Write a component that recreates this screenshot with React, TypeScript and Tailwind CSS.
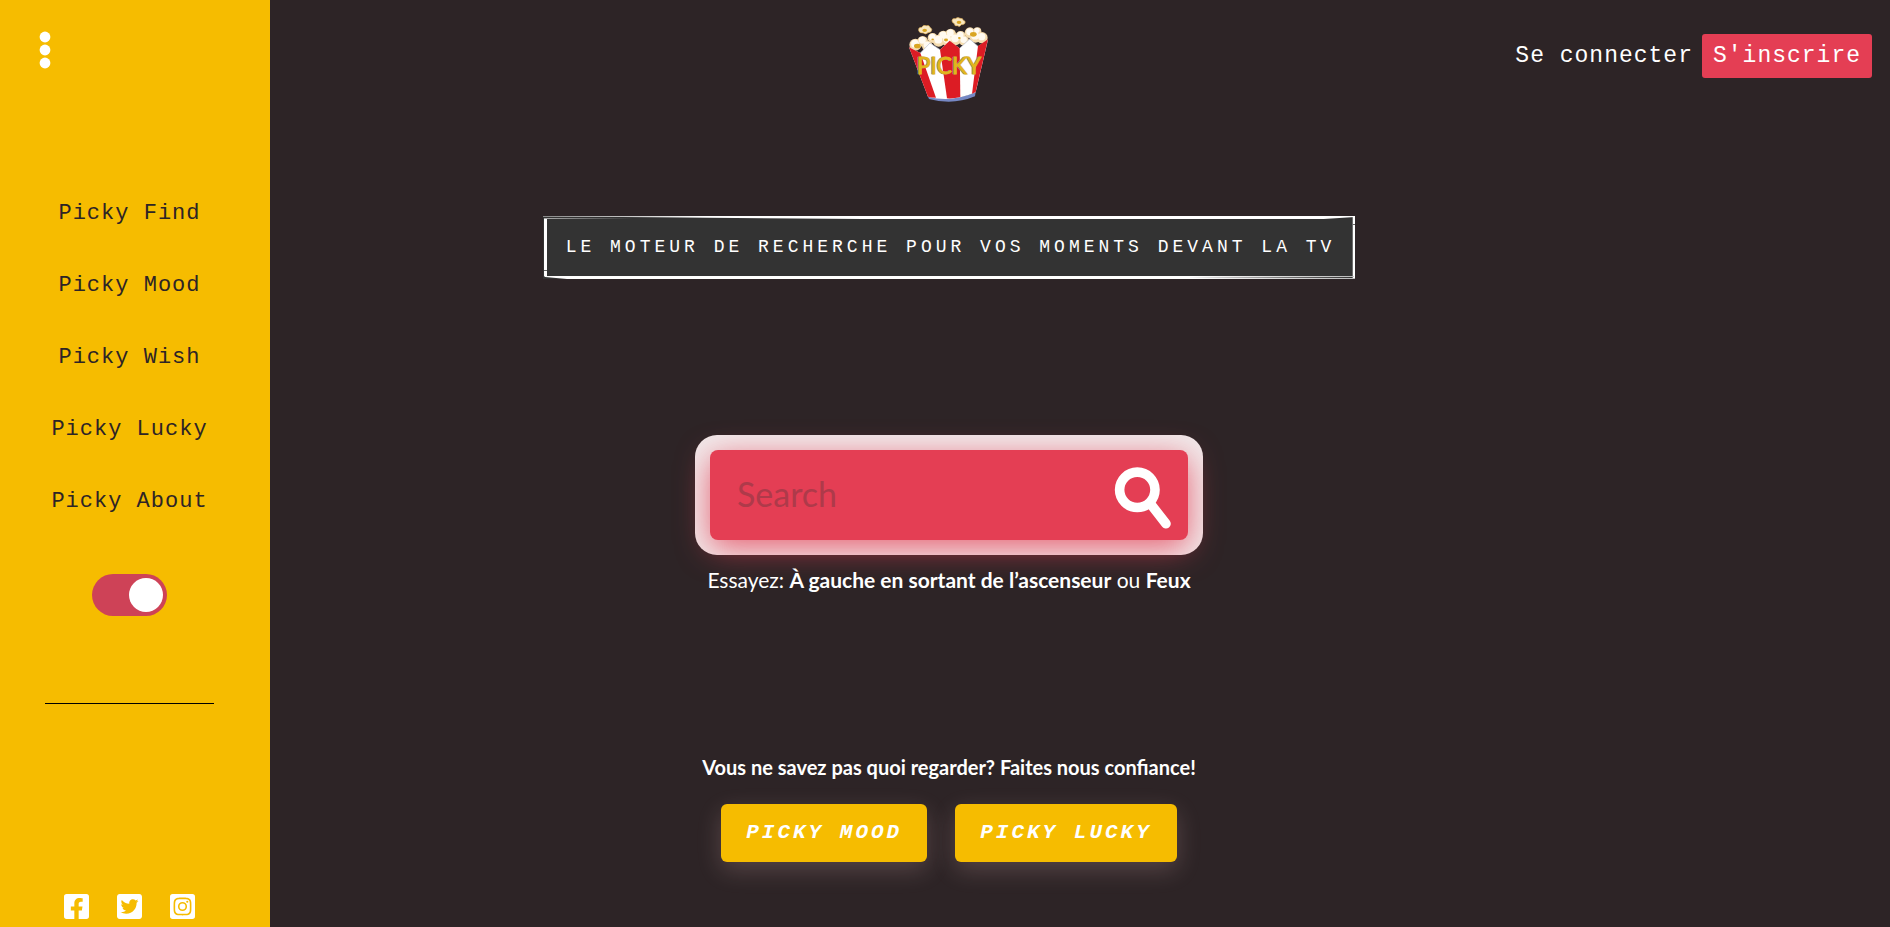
import { FaFacebookSquare, FaTwitterSquare, FaInstagramSquare } from "react-icons/fa";

const links = ["Picky Find", "Picky Mood", "Picky Wish", "Picky Lucky", "Picky About"];

const socials = [
  { name: "Facebook", Icon: FaFacebookSquare },
  { name: "Twitter", Icon: FaTwitterSquare },
  { name: "Instagram", Icon: FaInstagramSquare },
];

const kernels = [
  [76, 134, 18], [98, 124, 16], [112, 138, 16], [128, 114, 15], [146, 122, 18], [160, 108, 16],
  [182, 102, 16], [172, 120, 18], [196, 118, 18], [212, 108, 15], [222, 122, 15], [240, 98, 16],
  [256, 110, 18], [276, 113, 17], [262, 94, 12],
];

const flecks = [
  [82, 138, 10], [168, 120, 6], [250, 103, 10], [128, 118, 4], [208, 114, 4], [104, 91, 7], [207, 67, 7],
];

function Logo() {
  return (
    <svg viewBox="54 48 243 261" className="h-[87px] w-[81px]" role="img" aria-label="Picky">
      <g fill="#f8e7c0" stroke="#d9a850" strokeWidth="2">
        <path d="M86 92q-2-10 9-10 5-9 14-5 9-3 11 5 9 6 3 13-6 3-9 3-7 7-14 1-12 1-14-7z" />
        <path d="M186 62q0-8 10-6 8-6 14-1 9-1 10 6 9 3 4 10-6 4-10 3-5 9-12 3-8 3-9-6-8-4-7-9z" />
      </g>
      <g fill="#f5dcae">
        {kernels.map(([x, y, r]) => (
          <circle key={`${x}-${y}`} cx={x} cy={y} r={r} />
        ))}
      </g>
      <g fill="#fffaf0">
        {kernels.map(([x, y, r]) => (
          <circle key={`${x}-${y}`} cx={x - 1} cy={y - 3} r={r * 0.65} />
        ))}
      </g>
      <g fill="#d9a521">
        {flecks.map(([x, y, r]) => (
          <ellipse key={`${x}-${y}`} cx={x} cy={y} rx={r} ry={r * 0.7} />
        ))}
      </g>
      <path d="M112 286q70 22 145-10l-2 13q-66 28-138 8z" fill="#7688c4" />
      <path d="M57 142l34 17 29-30 30 20 29-27 30 23 30-28 25 22 30-20-37 158q-74 32-143 13z" fill="#fff" />
      <g fill="#dc1c24">
        <path d="M57 142l34 17 47 134q-14 0-24-3z" />
        <path d="M150 149l29-27 30 23 2 146q-18 5-40 4z" />
        <path d="M264 138l30-20-37 158-11 5z" />
      </g>
      <path d="M91 159l29-30 30 20M209 145l30-28 25 22" fill="none" stroke="#b9bfd0" strokeWidth="2" />
      <g fontFamily="Lato, sans-serif" fontSize="68" textAnchor="middle">
        <text x="174" y="223" fill="#7d8794" stroke="#7d8794" strokeWidth="2">PICKY</text>
        <text x="177" y="221" fill="#e3b41c" stroke="#e3b41c" strokeWidth="3">PICKY</text>
      </g>
    </svg>
  );
}

function SketchFrame() {
  return (
    <svg
      viewBox="0 0 812 63"
      preserveAspectRatio="none"
      className="pointer-events-none absolute inset-0 h-full w-full"
      aria-hidden="true"
    >
      <defs>
        <linearGradient id="fade">
          <stop offset="0" stopColor="#888" />
          <stop offset="0.2" stopColor="#fff" />
          <stop offset="1" stopColor="#fff" />
        </linearGradient>
        <linearGradient id="fadeLine">
          <stop offset="0" stopColor="#aaa" />
          <stop offset="1" stopColor="#333" />
        </linearGradient>
        <linearGradient id="fadeEnd">
          <stop offset="0" stopColor="#fff" />
          <stop offset="0.8" stopColor="#fff" />
          <stop offset="1" stopColor="#bbb" />
        </linearGradient>
      </defs>
      <path d="M0 0H812V1L780 3H320L80 1H0z" fill="url(#fade)" />
      <path d="M1 2H90V3H1z" fill="url(#fadeLine)" />
      <path d="M1 3H4V60H1z" fill="#fff" />
      <path d="M809 1H812V62H809z" fill="#fff" />
      <path d="M809 8H812V9H809zM1 54H4V55H1z" fill="#666" />
      <path d="M1 60H810V61L640 62L812 62V63H24L2 61z" fill="url(#fadeEnd)" />
    </svg>
  );
}

export default function App() {
  return (
    <div className="flex min-h-screen bg-[#2d2426] text-white">
      <aside className="flex w-[270px] shrink-0 flex-col items-center bg-[#f6bc00] pr-[11px] pb-[6px]">
        <button type="button" aria-label="Menu" className="ml-[39px] mt-[31px] self-start">
          <svg viewBox="0 0 12 38" className="h-[38px] w-[12px]" fill="#fff">
            <circle cx="6" cy="6" r="5.4" />
            <circle cx="6" cy="19" r="5.4" />
            <circle cx="6" cy="32" r="5.4" />
          </svg>
        </button>
        <nav className="mt-[108px] flex flex-col items-center">
          {links.map((label) => (
            <a
              key={label}
              href="#"
              className="flex h-[72px] items-center font-['Liberation_Mono',monospace] text-[22px] tracking-[1px] text-[#2d2426]"
            >
              {label}
            </a>
          ))}
        </nav>
        <label className="mt-[37px] flex cursor-pointer">
          <input type="checkbox" defaultChecked aria-label="Mode sombre" className="peer sr-only" />
          <span className="flex h-[42px] w-[75px] rounded-full bg-[#ce4257] p-1 peer-checked:justify-end">
            <span className="h-[34px] w-[34px] rounded-full bg-white" />
          </span>
        </label>
        <hr className="mt-[87px] w-[169px] border-t border-black" />
        <div className="mt-auto flex gap-7">
          {socials.map(({ name, Icon }) => (
            <a key={name} href="#" aria-label={name} className="flex w-[25px] justify-center">
              <Icon className="h-[29px] w-[25px]" />
            </a>
          ))}
        </div>
      </aside>

      <div className="flex grow flex-col">
        <header className="grid items-start">
          <a href="#" className="col-start-1 row-start-1 mr-[264px] mt-4 justify-self-center">
            <Logo />
          </a>
          <div className="col-start-1 row-start-1 mr-[18px] mt-[34px] flex items-center gap-[9px] justify-self-end font-['Liberation_Mono',monospace] text-[23px] tracking-[1px]">
            <a href="#">Se connecter</a>
            <a href="#" className="flex h-[44px] items-center rounded-[3px] bg-[#e43e54] px-[11px]">
              S'inscrire
            </a>
          </div>
        </header>

        <main className="mr-[262px] flex flex-col items-center">
          <h1 className="relative mt-[113px] flex h-[63px] items-center bg-[#333] pl-[23px] pr-[20px] font-['Liberation_Mono',monospace] text-[18px] uppercase tracking-[4px]">
            <SketchFrame />
            Le moteur de recherche pour vos moments devant la TV
          </h1>

          <form
            onSubmit={(e) => e.preventDefault()}
            className="mt-[156px] w-[508px] rounded-[22px] bg-[#f1eaeb] p-[15px]"
          >
            <div className="flex h-[90px] items-center rounded-[8px] bg-[#e43e54] pl-[27px] pr-[16px] shadow-[0_8px_32px_rgba(228,62,84,0.8)]">
              <input
                type="text"
                aria-label="Search"
                placeholder="Search"
                className="h-full min-w-0 grow bg-transparent pb-1 font-[Lato,sans-serif] text-[34px] outline-none placeholder:text-[#ae3a4a]"
              />
              <button type="submit" aria-label="Rechercher">
                <svg viewBox="0 0 58 68" className="h-[68px] w-[58px]" fill="none" stroke="#fff">
                  <circle cx="23.3" cy="28.8" r="17.7" strokeWidth="9.6" />
                  <path d="M37 43.5L52 62.7" strokeWidth="9.6" strokeLinecap="round" />
                </svg>
              </button>
            </div>
          </form>
          <p className="mt-[10px] font-[Lato,sans-serif] text-[21px] leading-[30px]">
            Essayez: <b>À gauche en sortant de l’ascenseur</b> ou <b>Feux</b>
          </p>

          <p className="mt-[157px] font-[Lato,sans-serif] text-[20px] font-bold leading-[30px]">
            Vous ne savez pas quoi regarder? Faites nous confiance!
          </p>
          <div className="mt-[22px] flex gap-7 font-['Liberation_Mono',monospace] text-[21px] font-bold italic">
            <button
              type="button"
              className="h-[58px] rounded-[6px] bg-[#f6bc00] px-[25px] uppercase tracking-[3px] shadow-[0_8px_24px_rgba(255,200,200,0.2)]"
            >
              Picky Mood
            </button>
            <button
              type="button"
              className="h-[58px] rounded-[6px] bg-[#f6bc00] px-[25px] uppercase tracking-[3px] shadow-[0_8px_24px_rgba(255,200,200,0.2)]"
            >
              Picky Lucky
            </button>
          </div>
        </main>
      </div>
    </div>
  );
}
